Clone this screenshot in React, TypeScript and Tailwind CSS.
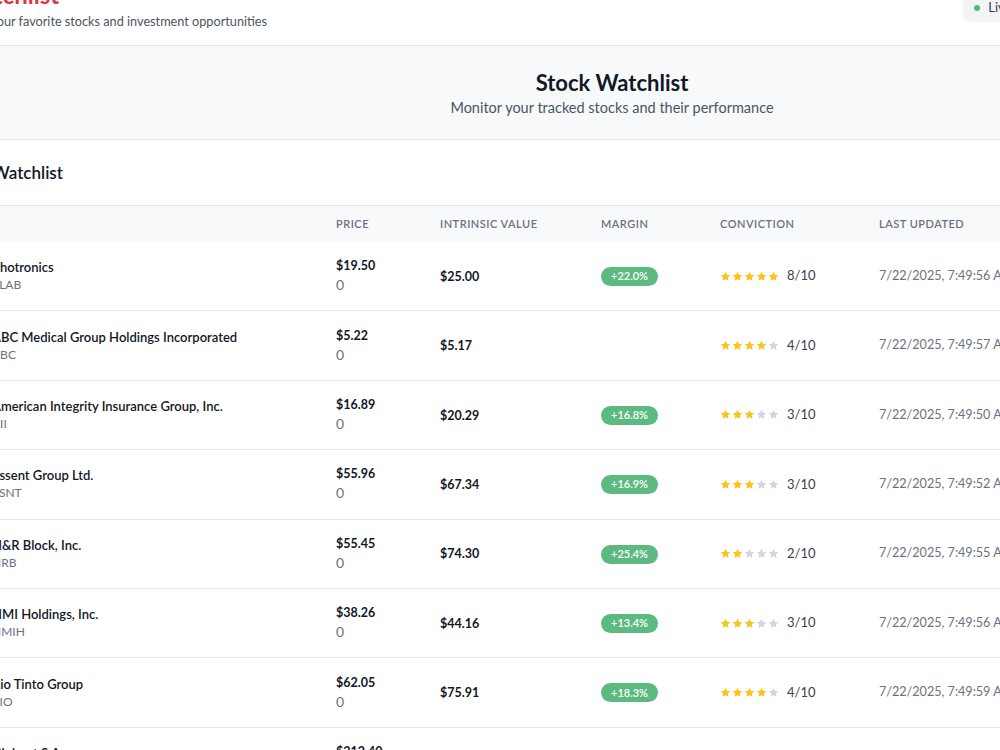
import React from 'react';

const rows = [
  { name: 'Photronics', ticker: 'PLAB', price: '$19.50', value: '$25.00', margin: '+22.0%', stars: 5, score: '8/10', updated: '7/22/2025, 7:49:56 AM' },
  { name: 'ABC Medical Group Holdings Incorporated', ticker: 'ABC', price: '$5.22', value: '$5.17', margin: '', stars: 4, score: '4/10', updated: '7/22/2025, 7:49:57 AM' },
  { name: 'American Integrity Insurance Group, Inc.', ticker: 'AII', price: '$16.89', value: '$20.29', margin: '+16.8%', stars: 3, score: '3/10', updated: '7/22/2025, 7:49:50 AM' },
  { name: 'Essent Group Ltd.', ticker: 'ESNT', price: '$55.96', value: '$67.34', margin: '+16.9%', stars: 3, score: '3/10', updated: '7/22/2025, 7:49:52 AM' },
  { name: 'H&R Block, Inc.', ticker: 'HRB', price: '$55.45', value: '$74.30', margin: '+25.4%', stars: 2, score: '2/10', updated: '7/22/2025, 7:49:55 AM' },
  { name: 'NMI Holdings, Inc.', ticker: 'NMIH', price: '$38.26', value: '$44.16', margin: '+13.4%', stars: 3, score: '3/10', updated: '7/22/2025, 7:49:56 AM' },
  { name: 'Rio Tinto Group', ticker: 'RIO', price: '$62.05', value: '$75.91', margin: '+18.3%', stars: 4, score: '4/10', updated: '7/22/2025, 7:49:59 AM' },
  { name: 'Globant S.A.', ticker: 'GLOB', price: '$212.40', value: '$248.10', margin: '+16.8%', stars: 3, score: '3/10', updated: '7/22/2025, 7:49:58 AM' },
];

const Star = ({ on }: { on: boolean }) => (
  <svg width="11" height="11" viewBox="0 0 24 24" className={on ? 'text-[#f7c51e]' : 'text-[#d4d6db]'}>
    <path fill="currentColor" d="M12 1.5l3.2 6.9 7.3.8-5.5 5 1.6 7.3L12 17.8l-6.6 3.7L7 14.2l-5.5-5 7.3-.8L12 1.5z" />
  </svg>
);

const cols = 'grid grid-cols-[344px_104px_161px_119px_159px_1fr]';

export default function App() {
  return (
    <div className="w-[1000px] h-[750px] overflow-hidden bg-white text-[#111827]" style={{ fontFamily: 'Lato, "Open Sans", sans-serif' }}>
      <div className="w-[1288px] -ml-[32px] -mt-[39px]">
        {/* top header */}
        <div className="flex items-start border-b border-gray-200 h-[85px] pt-[18px]">
          <div className="-ml-[10px]">
            <h1 className="text-[24px] leading-[32px] font-bold text-[#dc3545]">Watchlist</h1>
            <p className="text-[12.7px] leading-[20px] text-[#4b5563]">Track your favorite stocks and investment opportunities</p>
          </div>
          <div className="ml-auto mr-[203px] mt-[14px] flex items-center gap-[8px] bg-[#f3f4f6] rounded-lg px-[11px] h-[29px] text-[13px] text-[#374151]">
            <span className="w-[6px] h-[6px] rounded-full bg-[#4cbb74]" />
            Live Data
          </div>
        </div>

        {/* page intro */}
        <div className="bg-[#f8f9fa] border-b border-gray-200 pt-[22px] pb-[21px] text-center">
          <h2 className="text-[22px] leading-[30px] font-bold text-[#111827]">Stock Watchlist</h2>
          <p className="text-[14.5px] leading-[20px] text-[#4b5563]">Monitor your tracked stocks and their performance</p>
        </div>

        {/* watchlist table */}
        <div className="bg-white">
          <div className="px-6 pt-[21px] pb-5 border-b border-gray-200">
            <h3 className="text-[17px] leading-[24px] font-semibold">Watchlist</h3>
          </div>
          <div className={`${cols} bg-[#f8f9fa] h-[36px] items-center text-[11px] font-semibold tracking-[0.5px] uppercase text-[#6b7280]`}>
            <div className="px-6" />
            <div className="px-6">Price</div>
            <div className="px-6">Intrinsic Value</div>
            <div className="px-6">Margin</div>
            <div className="px-6">Conviction</div>
            <div className="px-6">Last Updated</div>
          </div>
          {rows.map(r => (
            <div key={r.ticker} className={`${cols} h-[69.4px] items-center border-b border-gray-200 text-[13px]`}>
              <div className="px-6">
                <div className="leading-[18px] font-semibold text-[#111827]">{r.name}</div>
                <div className="leading-[18px] text-[12px] text-[#6b7280]">{r.ticker}</div>
              </div>
              <div className="px-6">
                <div className="leading-[18px] text-[12.5px] font-bold">{r.price}</div>
                <div className="leading-[20px] text-[14px] text-[#6b7280]">0</div>
              </div>
              <div className="px-6 pt-[2px] text-[12.5px] font-bold">{r.value}</div>
              <div className="px-6">
                {r.margin && (
                  <span className="inline-flex items-center h-[19px] px-[10px] rounded-full bg-[#5cb97f] text-white text-[11px] font-semibold">{r.margin}</span>
                )}
              </div>
              <div className="px-6 flex items-center gap-[8px]">
                <div className="flex gap-[1px]">
                  {[0, 1, 2, 3, 4].map(i => <Star key={i} on={i < r.stars} />)}
                </div>
                <span className="text-[#374151]">{r.score}</span>
              </div>
              <div className="px-6 text-[12.6px] text-[#6b7280] whitespace-nowrap">{r.updated}</div>
            </div>
          ))}
        </div>
      </div>
    </div>
  );
}
